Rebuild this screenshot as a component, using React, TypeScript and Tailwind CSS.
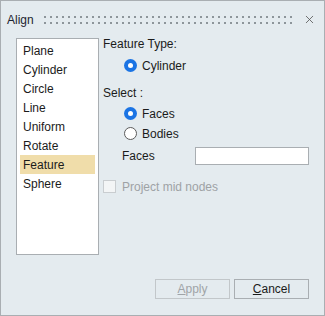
import { X } from 'lucide-react';

const SHAPES = ['Plane', 'Cylinder', 'Circle', 'Line', 'Uniform', 'Rotate', 'Feature', 'Sphere'];

function Radio({ checked }: { checked: boolean }) {
  return checked ? (
    <span className="w-[13px] h-[13px] rounded-full bg-[#1b74e4] flex items-center justify-center shrink-0">
      <span className="w-[5px] h-[5px] rounded-full bg-white" />
    </span>
  ) : (
    <span className="w-[13px] h-[13px] rounded-full border border-[#5b5b5b] bg-white shrink-0" />
  );
}

export default function App() {
  return (
    <div
      className="w-[325px] h-[316px] border border-[#a9aeb2] bg-[#e4ebef] flex flex-col text-[12px] text-[#1b1b1b]"
      style={{ fontFamily: '"Liberation Sans", Arial, sans-serif' }}
    >
      {/* title bar */}
      <div className="h-[37px] flex items-center pl-[6px] pr-[8px] shrink-0">
        <span className="text-[#1e2430]">Align</span>
        <svg className="ml-[10px] mt-[1px]" width="250" height="9" viewBox="0 0 250 9">
          <defs>
            <pattern id="grip" width="6" height="6" patternUnits="userSpaceOnUse">
              <rect x="0" y="0" width="2" height="2" fill="#8d959a" />
            </pattern>
          </defs>
          <rect x="0" y="0" width="250" height="9" fill="url(#grip)" />
        </svg>
        <X className="ml-auto w-[13px] h-[13px] text-[#555]" strokeWidth={1.5} />
      </div>

      <div className="flex pl-[15px] shrink-0">
        {/* list */}
        <div className="w-[83px] h-[217px] border border-[#a9aeb2] bg-white pt-[2px] px-[3px] shrink-0">
          {SHAPES.map((s) => (
            <div
              key={s}
              className={`h-[19px] flex items-center pl-[3px] ${s === 'Feature' ? 'bg-[#f0ddaa]' : ''}`}
            >
              {s}
            </div>
          ))}
        </div>

        {/* options */}
        <div className="ml-[4px] flex flex-col w-[206px]">
          <div className="h-[13px] leading-[13px]">Feature Type:</div>
          <div className="flex items-center gap-[5px] ml-[21px] mt-[8px] h-[13px]">
            <Radio checked />
            <span>Cylinder</span>
          </div>
          <div className="h-[13px] leading-[13px] mt-[15px]">Select :</div>
          <div className="flex items-center gap-[5px] ml-[21px] mt-[7px] h-[13px]">
            <Radio checked />
            <span>Faces</span>
          </div>
          <div className="flex items-center gap-[5px] ml-[21px] mt-[7px] h-[13px]">
            <Radio checked={false} />
            <span>Bodies</span>
          </div>
          <div className="flex items-center mt-[7px] h-[18px]">
            <span className="ml-[19px] w-[73px]">Faces</span>
            <div className="w-[114px] h-[18px] border border-[#a9aeb2] bg-white" />
          </div>
          <div className="flex items-center gap-[6px] mt-[15px] h-[13px]">
            <span className="w-[13px] h-[13px] border border-[#c9cdd0] bg-[#f3f5f6] shrink-0" />
            <span className="text-[#9ea2a5]">Project mid nodes</span>
          </div>
        </div>
      </div>

      {/* buttons */}
      <div className="flex justify-end gap-[4px] pr-[15px] mt-auto mb-[16px]">
        <button className="w-[75px] h-[20px] border border-[#c2c7ca] bg-[#e4ebef] text-[#a0a4a7]">
          <u>A</u>pply
        </button>
        <button className="w-[75px] h-[20px] border border-[#a9aeb2] bg-[#e4ebef] text-[#1b1b1b]">
          <u>C</u>ancel
        </button>
      </div>
    </div>
  );
}
